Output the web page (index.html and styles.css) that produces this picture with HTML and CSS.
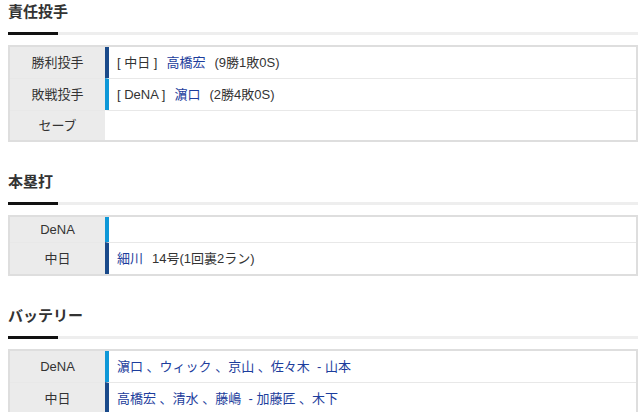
FILE: index.html
```html
<!doctype html>
<html lang="ja">
    <head>
        <meta charset="UTF-8" />
        <meta name="viewport" content="width=device-width, initial-scale=1.0" />
        <title>試合結果</title>
        <link rel="stylesheet" href="styles.css">
    </head>
    <body>
        <section class="result-block">
            <h2 class="block-title">責任投手</h2>
            <table class="result-table">
                <tr>
                    <th>勝利投手</th>
                    <td class="team-d">[ 中日 ]<a class="player" href="#">高橋宏</a>(9勝1敗0S)</td>
                </tr>
                <tr>
                    <th>敗戦投手</th>
                    <td class="team-db">[ DeNA ]<a class="player" href="#">濵口</a>(2勝4敗0S)</td>
                </tr>
                <tr class="row-empty">
                    <th>セーブ</th>
                    <td></td>
                </tr>
            </table>
        </section>

        <section class="result-block">
            <h2 class="block-title">本塁打</h2>
            <table class="result-table">
                <tr class="row-short">
                    <th>DeNA</th>
                    <td class="team-db"></td>
                </tr>
                <tr>
                    <th>中日</th>
                    <td class="team-d"><a class="player first" href="#">細川</a>14号(1回裏2ラン)</td>
                </tr>
            </table>
        </section>

        <section class="result-block">
            <h2 class="block-title">バッテリー</h2>
            <table class="result-table">
                <tr>
                    <th>DeNA</th>
                    <td class="team-db battery">濵口 、ウィック 、京山 、佐々木 &nbsp;- 山本</td>
                </tr>
                <tr>
                    <th>中日</th>
                    <td class="team-d battery">高橋宏 、清水 、藤嶋 &nbsp;- 加藤匠 、木下</td>
                </tr>
            </table>
        </section>
    </body>
</html>
```

FILE: styles.css
```css
body {
    font-family: "Liberation Sans", Arial, "Noto Sans CJK JP", sans-serif;
    margin: 0 1px 0 8px;
    color: #333;
    background-color: #fff;
}

.result-block {
    margin-bottom: 28px;
}

.block-title {
    position: relative;
    margin: 0;
    padding-bottom: 8px;
    font-size: 15px;
    line-height: 24px;
    font-weight: bold;
    color: #333;
    border-bottom: 3px solid #eeeeee;
}
.block-title::after {
    content: "";
    position: absolute;
    left: 0;
    bottom: -3px;
    width: 50px;
    height: 3px;
    background-color: #111;
}

.result-table {
    width: 100%;
    margin-top: 10px;
    border-collapse: separate;
    border-spacing: 0;
    border: 2px solid #dedede;
    font-size: 13px;
    line-height: 21px;
}
.result-table th,
.result-table td {
    padding: 5px 8px;
    border-top: 1px solid #e8e8e8;
    text-align: left;
}
.result-table tr:first-child th,
.result-table tr:first-child td {
    border-top: none;
}
.result-table .row-empty {
    line-height: 19px;
}
.result-table .row-short {
    line-height: 15px;
}
.result-table th {
    width: 79px;
    font-weight: normal;
    text-align: center;
    color: #333;
    background-color: #ebebeb;
}
.result-table td {
    border-left: 4px solid transparent;
}
.result-table td.team-d {
    border-left-color: #1a4a8a;
}
.result-table td.team-db {
    border-left-color: #0e98d8;
}

.player {
    color: #1c3d9c;
    text-decoration: none;
    margin: 0 9px;
}
.player.first {
    margin-left: 0;
}
.battery {
    color: #1c3d9c;
}
```
